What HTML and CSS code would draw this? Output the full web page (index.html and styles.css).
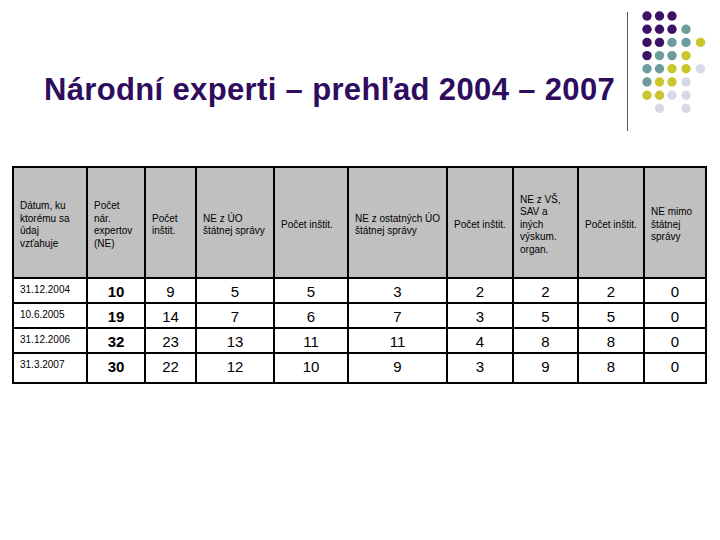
FILE: index.html
```html
<!DOCTYPE html>
<html lang="sk">
<head>
<meta charset="utf-8">
<title>Národní experti – prehľad 2004 – 2007</title>
<link rel="stylesheet" href="styles.css">
</head>
<body>
<div class="slide">
  <header class="head">
    <h1 class="title">Národní experti – prehľad 2004 – 2007</h1>
    <svg class="logo" width="94" height="140" viewBox="0 0 94 140" aria-hidden="true">
      <line x1="1.5" y1="12" x2="1.5" y2="131" stroke="#555" stroke-width="1"/>
      <g class="dots">
        <circle cx="21" cy="16" r="4.7" fill="#3b1265"/>
        <circle cx="33.5" cy="16" r="4.7" fill="#3b1265"/>
        <circle cx="46" cy="16" r="4.7" fill="#3b1265"/>

        <circle cx="21" cy="29.2" r="4.7" fill="#3b1265"/>
        <circle cx="33.5" cy="29.2" r="4.7" fill="#3b1265"/>
        <circle cx="46" cy="29.2" r="4.7" fill="#3b1265"/>
        <circle cx="60" cy="29.2" r="4.7" fill="#6e9c9c"/>

        <circle cx="21" cy="42.4" r="4.7" fill="#3b1265"/>
        <circle cx="33.5" cy="42.4" r="4.7" fill="#3b1265"/>
        <circle cx="46" cy="42.4" r="4.7" fill="#6e9c9c"/>
        <circle cx="60" cy="42.4" r="4.7" fill="#6e9c9c"/>
        <circle cx="74.5" cy="42.4" r="4.7" fill="#cbc62e"/>

        <circle cx="21" cy="55.6" r="4.7" fill="#3b1265"/>
        <circle cx="33.5" cy="55.6" r="4.7" fill="#6e9c9c"/>
        <circle cx="46" cy="55.6" r="4.7" fill="#6e9c9c"/>
        <circle cx="60" cy="55.6" r="4.7" fill="#cbc62e"/>

        <circle cx="21" cy="68.8" r="4.7" fill="#6e9c9c"/>
        <circle cx="33.5" cy="68.8" r="4.7" fill="#6e9c9c"/>
        <circle cx="46" cy="68.8" r="4.7" fill="#cbc62e"/>
        <circle cx="60" cy="68.8" r="4.7" fill="#cbc62e"/>
        <circle cx="74.5" cy="68.8" r="4.7" fill="#d8d8e8"/>

        <circle cx="21" cy="82" r="4.7" fill="#6e9c9c"/>
        <circle cx="33.5" cy="82" r="4.7" fill="#cbc62e"/>
        <circle cx="46" cy="82" r="4.7" fill="#cbc62e"/>
        <circle cx="60" cy="82" r="4.7" fill="#d8d8e8"/>

        <circle cx="21" cy="95.2" r="4.7" fill="#cbc62e"/>
        <circle cx="33.5" cy="95.2" r="4.7" fill="#cbc62e"/>
        <circle cx="46" cy="95.2" r="4.7" fill="#d8d8e8"/>
        <circle cx="60" cy="95.2" r="4.7" fill="#d8d8e8"/>

        <circle cx="33.5" cy="108.4" r="4.7" fill="#d8d8e8"/>
        <circle cx="60" cy="108.4" r="4.7" fill="#d8d8e8"/>
      </g>
    </svg>
  </header>

  <table class="grid">
    <thead>
      <tr>
        <th>Dátum, ku<br>ktorému sa<br>údaj<br>vzťahuje</th>
        <th>Počet<br>nár.<br>expertov<br>(NE)</th>
        <th>Počet<br>inštit.</th>
        <th>NE z ÚO<br>štátnej správy</th>
        <th>Počet inštit.</th>
        <th>NE z ostatných ÚO<br>štátnej správy</th>
        <th>Počet inštit.</th>
        <th>NE z VŠ,<br>SAV a<br>iných<br>výskum.<br>organ.</th>
        <th>Počet inštit.</th>
        <th>NE mimo<br>štátnej<br>správy</th>
      </tr>
    </thead>
    <tbody>
      <tr>
        <td class="date">31.12.2004</td><td class="num bold">10</td><td class="num">9</td><td class="num">5</td><td class="num">5</td><td class="num">3</td><td class="num">2</td><td class="num">2</td><td class="num">2</td><td class="num">0</td>
      </tr>
      <tr>
        <td class="date">10.6.2005</td><td class="num bold">19</td><td class="num">14</td><td class="num">7</td><td class="num">6</td><td class="num">7</td><td class="num">3</td><td class="num">5</td><td class="num">5</td><td class="num">0</td>
      </tr>
      <tr>
        <td class="date">31.12.2006</td><td class="num bold">32</td><td class="num">23</td><td class="num">13</td><td class="num">11</td><td class="num">11</td><td class="num">4</td><td class="num">8</td><td class="num">8</td><td class="num">0</td>
      </tr>
      <tr class="last">
        <td class="date">31.3.2007</td><td class="num bold">30</td><td class="num">22</td><td class="num">12</td><td class="num">10</td><td class="num">9</td><td class="num">3</td><td class="num">9</td><td class="num">8</td><td class="num">0</td>
      </tr>
    </tbody>
  </table>
</div>
</body>
</html>
```

FILE: styles.css
```css
html, body {
  margin: 0;
  padding: 0;
  background: #ffffff;
}

.slide {
  width: 720px;
  height: 540px;
  overflow: hidden;
  font-family: "Liberation Sans", Arial, sans-serif;
  color: #000;
}

.head {
  display: flex;
  align-items: flex-start;
  height: 166px;
}

.title {
  margin: 72px 0 0 44px;
  font-size: 31px;
  line-height: 36px;
  font-weight: bold;
  letter-spacing: 0.35px;
  color: #2e0c5e;
  white-space: nowrap;
}

.logo {
  display: block;
  margin-left: auto;
}

.grid {
  display: grid;
  grid-template-columns: 72px 56px 49px 76px 72px 97px 64px 63px 64px 60px;
  grid-template-rows: 109px 23px 23px 23px 28px;
  gap: 2px;
  padding: 2px;
  margin-left: 12px;
  width: max-content;
  background: #000;
  border-spacing: 0;
}

.grid thead,
.grid tbody,
.grid tr {
  display: contents;
}

.grid th {
  background: #c0c0c0;
  font-weight: normal;
  font-size: 10px;
  line-height: 12.5px;
  text-align: left;
  padding: 5px 0 0 6px;
  display: flex;
  align-items: center;
  white-space: nowrap;
}

.grid td {
  background: #fff;
  padding: 0;
}

.date {
  font-size: 10px;
  line-height: 12px;
  padding: 5px 0 0 6px !important;
}

.num {
  font-size: 15px;
  line-height: 16px;
  text-align: center;
  padding-top: 5px !important;
}

.bold {
  font-weight: bold;
}
```
